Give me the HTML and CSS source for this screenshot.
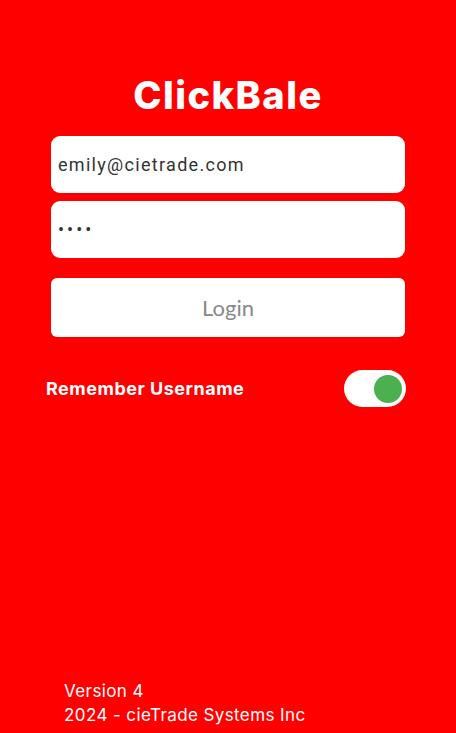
FILE: index.html
```html
<!DOCTYPE html>
<html lang="en">
<head>
  <meta charset="UTF-8">
  <meta name="viewport" content="width=device-width, initial-scale=1.0">
  <title>ClickBale</title>
  <link rel="stylesheet" href="styles.css">
</head>
<body>

  <div class="page">
    <h1 class="brand">ClickBale</h1>

    <form class="login-form">
      <input type="text" class="field" value="emily@cietrade.com">
      <input type="password" class="field field-pass" value="abcd">
      <button type="button" class="login-btn">Login</button>
    </form>

    <div class="remember">
      <span class="remember-label">Remember Username</span>
      <span class="toggle"><span class="knob"></span></span>
    </div>

    <div class="footer">
      <div>Version 4</div>
      <div>2024 - cieTrade Systems Inc</div>
    </div>
  </div>

</body>
</html>
```

FILE: styles.css
```css
body {
  margin: 0;
  padding: 0;
  background-color: #ff0000;
  font-family: Roboto, "Liberation Sans", sans-serif;
}

.page {
  min-height: 733px;
  display: flex;
  flex-direction: column;
  box-sizing: border-box;
}

.brand {
  margin: 72px 0 0;
  text-align: center;
  color: #fff;
  font-family: Inter, "Liberation Sans", sans-serif;
  font-weight: 800;
  font-size: 38px;
  line-height: 46px;
  letter-spacing: 1.5px;
}

.login-form {
  display: flex;
  flex-direction: column;
  margin: 18px 51px 0;
}

.field {
  height: 57px;
  box-sizing: border-box;
  border: none;
  border-radius: 9px;
  background: #fff;
  padding: 0 7px;
  font-family: Roboto, "Liberation Sans", sans-serif;
  font-size: 18px;
  letter-spacing: 1.3px;
  color: #333;
  outline: none;
}

.field-pass {
  margin-top: 8px;
  letter-spacing: 3px;
}

.login-btn {
  margin-top: 20px;
  height: 59px;
  border: none;
  border-radius: 6px;
  background: #fff;
  color: #888;
  font-family: Lato, sans-serif;
  font-size: 22px;
}

.remember {
  display: flex;
  justify-content: space-between;
  align-items: center;
  margin: 33px 50px 0 46px;
}

.remember-label {
  color: #fff;
  font-family: Inter, "Liberation Sans", sans-serif;
  font-weight: 700;
  font-size: 18px;
  letter-spacing: 0.5px;
}

.toggle {
  width: 62px;
  height: 37px;
  border-radius: 19px;
  background: #fff;
  display: flex;
  align-items: center;
  justify-content: flex-end;
  padding: 0 4px;
  box-sizing: border-box;
}

.knob {
  width: 28px;
  height: 28px;
  border-radius: 50%;
  background: #4caf50;
}

.footer {
  margin-top: auto;
  padding: 0 0 6px 64px;
  color: #fff;
  font-family: Inter, "Liberation Sans", sans-serif;
  font-size: 17px;
  line-height: 24px;
  letter-spacing: 0.4px;
}
```
